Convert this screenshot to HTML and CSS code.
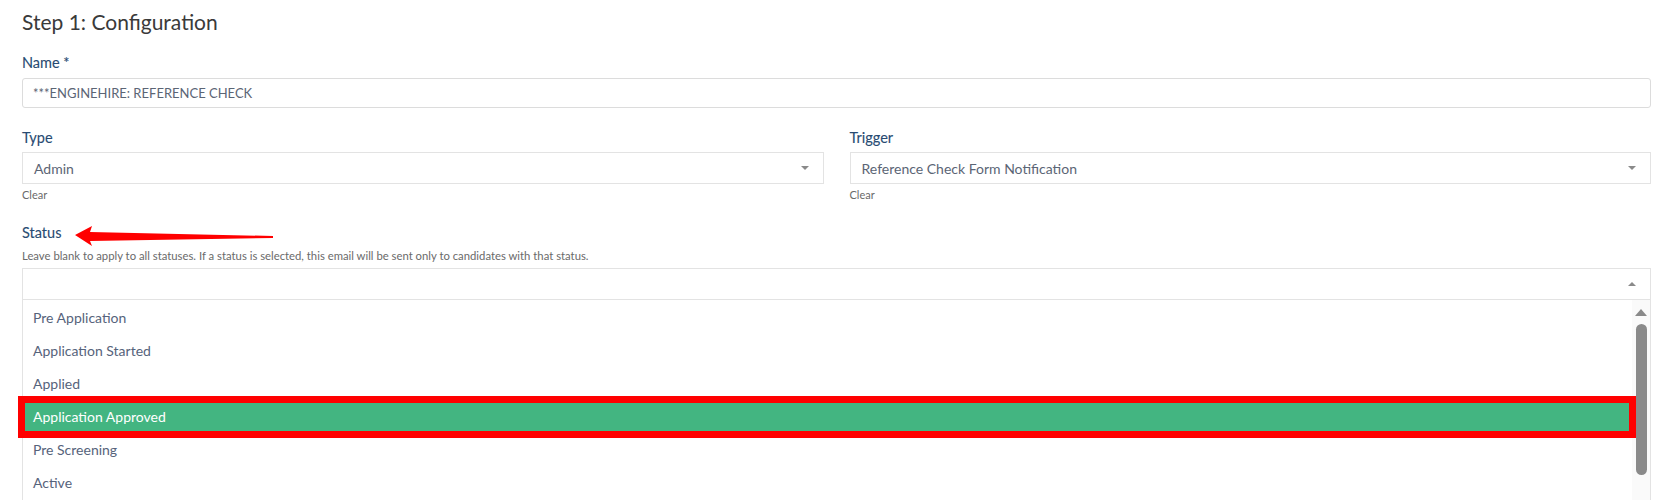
FILE: index.html
```html
<!DOCTYPE html>
<html>
<head>
<meta charset="utf-8">
<link rel="stylesheet" href="styles.css">
</head>
<body>
<div class="page">
  <h1 class="title">Step 1: Configuration</h1>

  <div class="field field-name">
    <label class="label">Name *</label>
    <div class="input">***ENGINEHIRE: REFERENCE CHECK</div>
  </div>

  <div class="row">
    <div class="field">
      <label class="label">Type</label>
      <div class="select"><span class="select-value">Admin</span><span class="caret down"></span></div>
      <div class="clear">Clear</div>
    </div>
    <div class="field">
      <label class="label">Trigger</label>
      <div class="select"><span class="select-value">Reference Check Form Notification</span><span class="caret down"></span></div>
      <div class="clear">Clear</div>
    </div>
  </div>

  <div class="field field-status">
    <div class="status-head">
      <label class="label">Status</label>
      <svg class="arrow" width="200" height="22" viewBox="0 0 200 22">
        <polygon points="0,9 17,0 15,6 198,10 198,12 15,15 17,20" fill="#ff0000"/>
      </svg>
    </div>
    <div class="help">Leave blank to apply to all statuses. If a status is selected, this email will be sent only to candidates with that status.</div>
    <div class="select select-open"><span class="select-value"></span><span class="caret up"></span></div>
    <div class="dropdown">
      <ul class="options">
        <li class="option">Pre Application</li>
        <li class="option">Application Started</li>
        <li class="option">Applied</li>
        <li class="option option-active">Application Approved</li>
        <li class="option">Pre Screening</li>
        <li class="option">Active</li>
      </ul>
      <div class="scrollbar">
        <span class="scroll-up"></span>
        <span class="scroll-thumb"></span>
      </div>
    </div>
  </div>
</div>
</body>
</html>
```

FILE: styles.css
```css
* { box-sizing: border-box; }
html, body { margin: 0; padding: 0; background: #fff; overflow: hidden; }
body { font-family: Lato, "Noto Sans", sans-serif; color: #333; }

.page {
  padding: 10px 14px 0 22px;
}

.title {
  margin: 0;
  font-size: 21px;
  line-height: 24px;
  font-weight: 400;
  color: #3a3a3a;
}

.field { display: flex; flex-direction: column; }
.field-name { margin-top: 20px; }

.label {
  font-size: 14.5px;
  line-height: 17px;
  font-weight: 400;
  color: #284b72;
  -webkit-text-stroke: 0.12px #284b72;
}

.input {
  margin-top: 7px;
  height: 30px;
  border: 1px solid #dcdcdc;
  border-radius: 3px;
  padding: 0 10px;
  display: flex;
  align-items: center;
  font-size: 13px;
  color: #5b6575;
}

.row {
  margin-top: 21px;
  display: grid;
  grid-template-columns: 1fr 1fr;
  column-gap: 26px;
}

.select {
  margin-top: 6px;
  height: 32px;
  border: 1px solid #e3e3e3;
  display: flex;
  align-items: center;
  padding: 0 14px 0 11px;
  font-size: 14px;
  color: #5b6575;
}
.select-value { flex: 1; }

.caret {
  width: 0; height: 0;
  border-left: 4px solid transparent;
  border-right: 4px solid transparent;
}
.caret.down { border-top: 4px solid #8a8a8a; }
.caret.up { border-bottom: 4px solid #8a8a8a; }

.clear {
  margin-top: 5px;
  font-size: 11px;
  line-height: 12px;
  color: #6a6a6a;
}

.field-status { margin-top: 23px; }
.status-head { display: flex; align-items: center; position: relative; }
.arrow { position: absolute; left: 53px; top: 2px; }

.help {
  margin-top: 8px;
  font-size: 11.3px;
  line-height: 13px;
  color: #6a6a6a;
}

.select-open { margin-top: 6px; }

.dropdown {
  display: flex;
  border-left: 1px solid #e3e3e3;
  border-right: 1px solid #e3e3e3;
  height: 210px;
}

.options {
  list-style: none;
  margin: 0;
  padding: 0;
  flex: 1;
}

.option {
  height: 33px;
  display: flex;
  align-items: center;
  padding-left: 10px;
  font-size: 14px;
  color: #56637b;
}
.option:first-child { margin-top: 1px; }

.option-active {
  position: relative;
  background: #43b581;
  color: #fff;
}
.option-active::after {
  content: "";
  position: absolute;
  top: -4px; bottom: -5px;
  left: -5px; right: -4px;
  border: 7px solid #ff0000;
}

.scrollbar {
  width: 18px;
  background: #fafafa;
  display: flex;
  flex-direction: column;
  align-items: center;
}
.scroll-up {
  margin-top: 9px;
  width: 0; height: 0;
  border-left: 6px solid transparent;
  border-right: 6px solid transparent;
  border-bottom: 7px solid #8a8a8a;
}
.scroll-thumb {
  margin-top: 8px;
  width: 11px;
  height: 151px;
  border-radius: 6px;
  background: #8a8a8a;
}
```
